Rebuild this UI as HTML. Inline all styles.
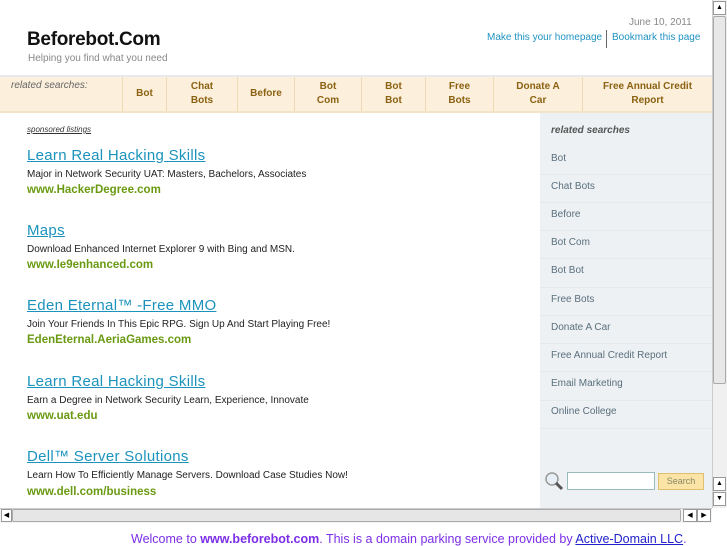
<!DOCTYPE html>
<html><head><meta charset="utf-8"><style>
*{margin:0;padding:0;box-sizing:border-box}
body{width:727px;height:545px;overflow:hidden;background:#fff;font-family:"Liberation Sans",sans-serif;position:relative}
.a{position:absolute;white-space:nowrap}
#frame{position:absolute;left:0;top:0;width:712px;height:508px;overflow:hidden;background:#fff}
.nav{position:absolute;left:0;top:75px;width:712px;height:38px;background:#fcefdc;border-top:2px solid #e6e9ee;border-bottom:2px solid #f3e3c7}
.nav .c{position:absolute;top:0;height:34px;border-left:1px solid #ecd9b5;display:flex;align-items:center;justify-content:center;text-align:center;font-size:10px;font-weight:bold;color:#8a6212;line-height:14px}
.side{position:absolute;left:540px;top:113px;width:172px;height:395px;background:#edf1f3}
.side .i{position:absolute;left:11px;font-size:10px;color:#5a6f7d}
.side .ln{position:absolute;left:0;width:172px;border-top:1px solid #e4e9ec}
.t{font-size:15px;color:#1c93bd;text-decoration:underline;letter-spacing:0.3px}
.d{font-size:10px;color:#222}
.u{font-size:11.5px;font-weight:bold;color:#6a9a12}
</style></head><body>
<div id="frame">
<div class="a" style="left:629px;top:17px;font-size:10px;color:#888">June 10, 2011</div>
<div class="a" style="left:27px;top:29px;font-size:19px;font-weight:bold;color:#111;letter-spacing:-0.3px">Beforebot.Com</div>
<div class="a" style="left:28px;top:53px;font-size:10px;color:#888">Helping you find what you need</div>
<div class="a" style="left:487px;top:32px;font-size:10px;color:#1f93c2">Make this your homepage</div>
<div class="a" style="left:606px;top:30px;height:18px;border-left:1px solid #666"></div>
<div class="a" style="left:612px;top:32px;font-size:10px;color:#1f93c2">Bookmark this page</div>
<div class="nav">
<div class="a" style="left:11px;top:3px;font-size:10px;font-style:italic;color:#666">related searches:</div>
<div class="c" style="left:122px;width:44px">Bot</div>
<div class="c" style="left:166px;width:71px">Chat<br>Bots</div>
<div class="c" style="left:237px;width:57px">Before</div>
<div class="c" style="left:294px;width:67px">Bot<br>Com</div>
<div class="c" style="left:361px;width:64px">Bot<br>Bot</div>
<div class="c" style="left:425px;width:68px">Free<br>Bots</div>
<div class="c" style="left:493px;width:89px">Donate A<br>Car</div>
<div class="c" style="left:582px;width:130px">Free Annual Credit<br>Report</div>
</div>
<div class="a" style="left:27px;top:125px;font-size:8px;font-style:italic;color:#333;text-decoration:underline">sponsored listings</div>

<div class="a t" style="left:27px;top:147px">Learn Real Hacking Skills</div>
<div class="a d" style="left:27px;top:169px">Major in Network Security UAT: Masters, Bachelors, Associates</div>
<div class="a u" style="left:27px;top:184px">www.HackerDegree.com</div>

<div class="a t" style="left:27px;top:222px">Maps</div>
<div class="a d" style="left:27px;top:244px">Download Enhanced Internet Explorer 9 with Bing and MSN.</div>
<div class="a u" style="left:27px;top:259px">www.Ie9enhanced.com</div>

<div class="a t" style="left:27px;top:297px">Eden Eternal™ -Free MMO</div>
<div class="a d" style="left:27px;top:319px">Join Your Friends In This Epic RPG. Sign Up And Start Playing Free!</div>
<div class="a u" style="left:27px;top:334px">EdenEternal.AeriaGames.com</div>

<div class="a t" style="left:27px;top:373px">Learn Real Hacking Skills</div>
<div class="a d" style="left:27px;top:395px">Earn a Degree in Network Security Learn, Experience, Innovate</div>
<div class="a u" style="left:27px;top:410px">www.uat.edu</div>

<div class="a t" style="left:27px;top:448px">Dell™ Server Solutions</div>
<div class="a d" style="left:27px;top:470px">Learn How To Efficiently Manage Servers. Download Case Studies Now!</div>
<div class="a u" style="left:27px;top:486px">www.dell.com/business</div>

<div class="side">
<div class="a" style="left:11px;top:12px;font-size:10px;font-weight:bold;font-style:italic;color:#555">related searches</div>
<div class="i" style="top:40px">Bot</div><div class="ln" style="top:61px"></div>
<div class="i" style="top:68px">Chat Bots</div><div class="ln" style="top:89px"></div>
<div class="i" style="top:96px">Before</div><div class="ln" style="top:117px"></div>
<div class="i" style="top:124px">Bot Com</div><div class="ln" style="top:145px"></div>
<div class="i" style="top:152px">Bot Bot</div><div class="ln" style="top:174px"></div>
<div class="i" style="top:181px">Free Bots</div><div class="ln" style="top:202px"></div>
<div class="i" style="top:209px">Donate A Car</div><div class="ln" style="top:230px"></div>
<div class="i" style="top:237px">Free Annual Credit Report</div><div class="ln" style="top:258px"></div>
<div class="i" style="top:265px">Email Marketing</div><div class="ln" style="top:287px"></div>
<div class="i" style="top:293px">Online College</div><div class="ln" style="top:315px"></div>
<svg class="a" style="left:4px;top:358px" width="20" height="20"><circle cx="8" cy="8" r="6" fill="#e8f0f5" stroke="#999" stroke-width="1.5"/><line x1="12" y1="12" x2="18" y2="18" stroke="#555" stroke-width="3"/></svg>
<div class="a" style="left:27px;top:359px;width:88px;height:18px;background:#fff;border:1px solid #9bb"></div>
<div class="a" style="left:118px;top:360px;width:46px;height:17px;background:#fbe4a6;border:1px solid #e0c070;font-size:9px;color:#886;text-align:center;line-height:15px">Search</div>
</div>
</div>
<div class="a" style="left:712px;top:0;width:15px;height:508px;background:#f0f0f0;border-left:1px solid #ccc"></div>
<div class="a" style="left:713px;top:1px;width:13px;height:14px;background:#fff;border:1px solid #999;font-size:7px;text-align:center;line-height:12px">▲</div>
<div class="a" style="left:713px;top:16px;width:13px;height:368px;background:#e8e8e8;border:1px solid #aaa;border-radius:2px"></div>
<div class="a" style="left:713px;top:477px;width:13px;height:14px;background:#fff;border:1px solid #999;font-size:7px;text-align:center;line-height:12px">▲</div>
<div class="a" style="left:713px;top:492px;width:13px;height:14px;background:#fff;border:1px solid #999;font-size:7px;text-align:center;line-height:12px">▼</div>
<div class="a" style="left:0;top:508px;width:712px;height:15px;background:#f4f4f4;border-top:1px solid #ccc"></div>
<div class="a" style="left:1px;top:509px;width:11px;height:13px;background:#fff;border:1px solid #999;font-size:7px;text-align:center;line-height:11px">◀</div>
<div class="a" style="left:12px;top:509px;width:669px;height:13px;background:#e6e6e6;border:1px solid #aaa;border-radius:2px"></div>
<div class="a" style="left:683px;top:509px;width:14px;height:13px;background:#fff;border:1px solid #999;font-size:7px;text-align:center;line-height:11px">◀</div>
<div class="a" style="left:697px;top:509px;width:14px;height:13px;background:#fff;border:1px solid #999;font-size:7px;text-align:center;line-height:11px">▶</div>
<div class="a" style="left:131px;top:532px;font-size:12.5px;color:#7c2ee8">Welcome to <b>www.beforebot.com</b>. This is a domain parking service provided by <span style="color:#2222cc;text-decoration:underline">Active-Domain LLC</span>.</div>
</body></html>
